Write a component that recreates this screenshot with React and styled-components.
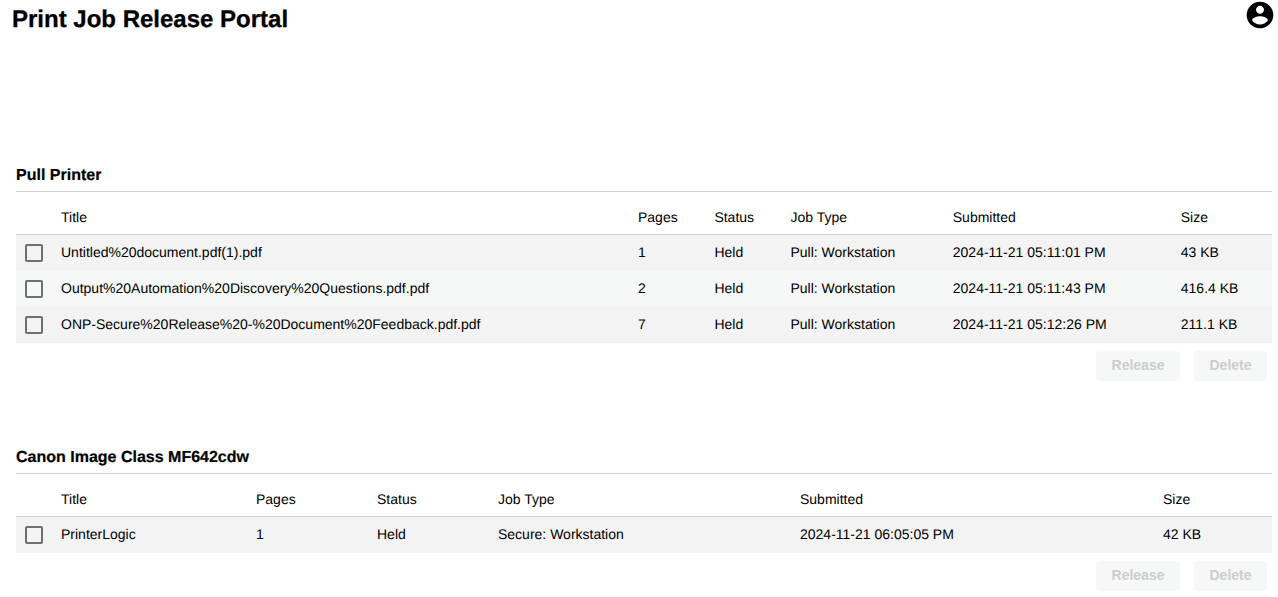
import React from "react";
import styled, { createGlobalStyle } from "styled-components";

const Global = createGlobalStyle`
  html, body { margin: 0; padding: 0; background: #fff; }
  body { font-family: "Liberation Sans", Arial, sans-serif; color: #000; overflow: hidden; text-rendering: geometricPrecision; }
`;

const Page = styled.div`
  width: 1278px;
  height: 597px;
  overflow: hidden;
`;

const Header = styled.header`
  display: flex;
  justify-content: space-between;
  align-items: flex-start;
  height: 130px;
  padding: 0 2px 0 12px;
`;

const Title = styled.h1`
  margin: 6px 0 0;
  font-size: 24px;
  line-height: 28px;
  font-weight: 700;
  -webkit-text-stroke: 0.3px #000;
`;

const UserIcon = styled.svg`
  width: 32px;
  height: 32px;
  margin-top: -1px;
  fill: #000;
`;

const Section = styled.section`
  margin: 0 6px 0 16px;
  padding-top: 32px;
  height: 250px;
  box-sizing: content-box;
`;

const SectionTitle = styled.h2`
  margin: 0;
  height: 29px;
  line-height: 28px;
  font-size: 16px;
  font-weight: 700;
  -webkit-text-stroke: 0.2px #000;
  border-bottom: 1px solid #d0d0d0;
`;

const Row = styled.div`
  display: grid;
  grid-template-columns: ${(p) => p.$cols};
  align-items: center;
  height: 36px;
  padding-bottom: 2px;
  box-sizing: border-box;
  font-size: 14px;
  line-height: 16px;
  background: ${(p) => (p.$alt ? "#f6f8f7" : "#f3f3f3")};
`;

const HeadRow = styled(Row)`
  height: 43px;
  padding: 8px 0 0;
  background: #fff;
  border-bottom: 1px solid #d0d0d0;
`;

const Box = styled.span`
  display: block;
  width: 18px;
  height: 18px;
  margin: 2px 0 0 9px;
  box-sizing: border-box;
  border: 2px solid #6f6f6f;
  border-radius: 2px;
`;

const Actions = styled.div`
  display: flex;
  justify-content: flex-end;
  gap: 14px;
  padding: 8px 5px 0 0;
`;

const ActionButton = styled.button`
  height: 30px;
  width: ${(p) => p.$w}px;
  padding: 0 0 2px;
  border: 0;
  border-radius: 4px;
  background: #f6f7f7;
  color: #cdcdcd;
  font-family: "Liberation Sans", Arial, sans-serif;
  font-size: 14px;
  font-weight: 700;
`;

const sections = [
  {
    name: "Pull Printer",
    cols: "45px 577px 76.4px 76.1px 162.3px 228px 91.2px",
    jobs: [
      ["Untitled%20document.pdf(1).pdf", "1", "Held", "Pull: Workstation", "2024-11-21 05:11:01 PM", "43 KB"],
      ["Output%20Automation%20Discovery%20Questions.pdf.pdf", "2", "Held", "Pull: Workstation", "2024-11-21 05:11:43 PM", "416.4 KB"],
      ["ONP-Secure%20Release%20-%20Document%20Feedback.pdf.pdf", "7", "Held", "Pull: Workstation", "2024-11-21 05:12:26 PM", "211.1 KB"],
    ],
  },
  {
    name: "Canon Image Class MF642cdw",
    cols: "45px 195px 121px 121px 302px 363px 109px",
    jobs: [["PrinterLogic", "1", "Held", "Secure: Workstation", "2024-11-21 06:05:05 PM", "42 KB"]],
  },
];

const heads = ["Title", "Pages", "Status", "Job Type", "Submitted", "Size"];

export default function App() {
  return (
    <Page>
      <Global />
      <Header>
        <Title>Print Job Release Portal</Title>
        <UserIcon viewBox="0 0 24 24">
          <path d="M12 2C6.48 2 2 6.48 2 12s4.48 10 10 10 10-4.48 10-10S17.52 2 12 2zm0 3c1.66 0 3 1.34 3 3s-1.34 3-3 3-3-1.34-3-3 1.34-3 3-3zm0 14.2c-2.5 0-4.71-1.28-6-3.22.03-1.99 4-3.08 6-3.08 1.99 0 5.97 1.09 6 3.08-1.29 1.94-3.5 3.22-6 3.22z" />
        </UserIcon>
      </Header>
      {sections.map((s) => (
        <Section key={s.name}>
          <SectionTitle>{s.name}</SectionTitle>
          <HeadRow $cols={s.cols}>
            <span />
            {heads.map((h) => (
              <span key={h}>{h}</span>
            ))}
          </HeadRow>
          {s.jobs.map((job, i) => (
            <Row key={job[0]} $cols={s.cols} $alt={i % 2 === 1}>
              <Box />
              {job.map((c, j) => (
                <span key={j}>{c}</span>
              ))}
            </Row>
          ))}
          <Actions>
            <ActionButton $w={84} disabled>Release</ActionButton>
            <ActionButton $w={73} disabled>Delete</ActionButton>
          </Actions>
        </Section>
      ))}
    </Page>
  );
}
